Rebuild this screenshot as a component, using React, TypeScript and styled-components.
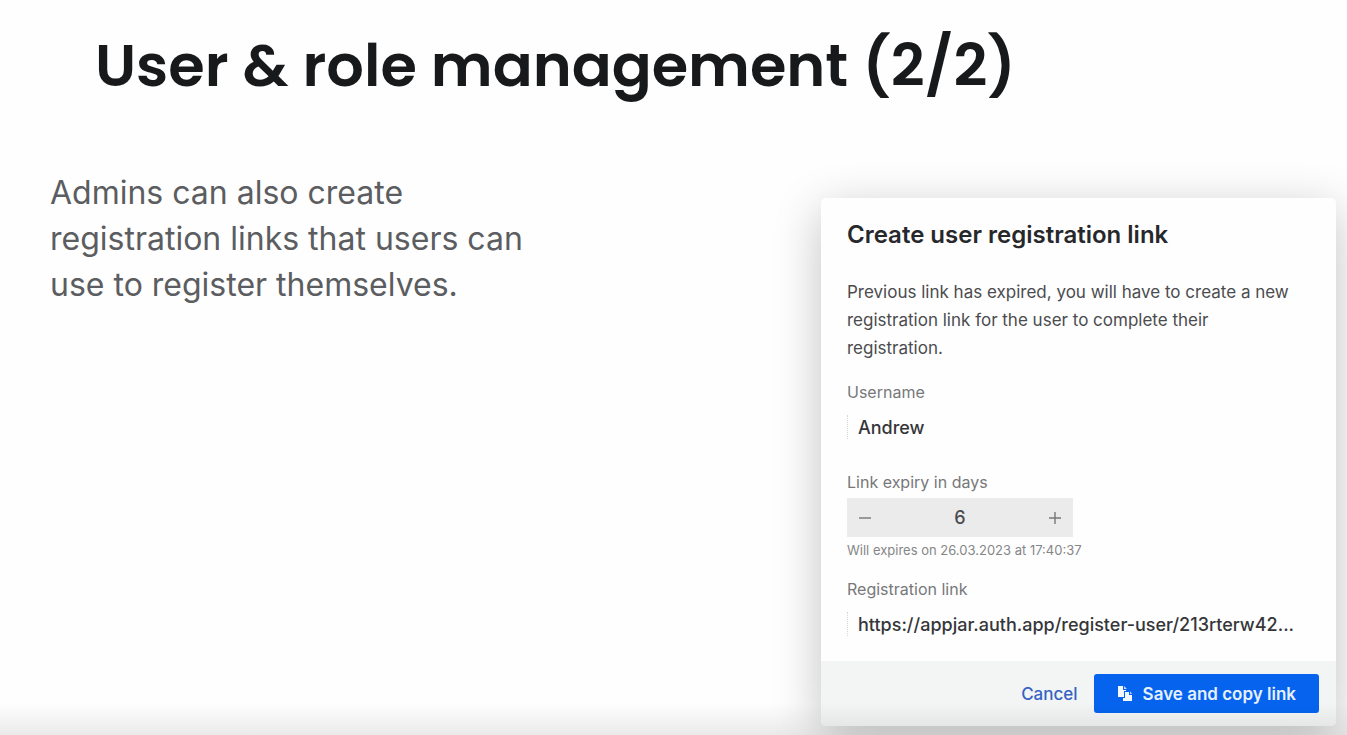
import React, { useState } from "react";
import styled, { createGlobalStyle } from "styled-components";

const GlobalStyle = createGlobalStyle`
  *, *::before, *::after { box-sizing: border-box; }
  body {
    margin: 0;
    background: #fefefe;
    font-family: Inter, "Liberation Sans", sans-serif;
  }
  button, input { font: inherit; }
`;

const Slide = styled.main`
  position: relative;
  min-height: 100vh;
  overflow: hidden;
  padding: 24px 11px 9px 50px;
`;

const Title = styled.h1`
  margin: 0;
  padding-left: 45px;
  font-family: Poppins, Inter, sans-serif;
  font-size: 59px;
  line-height: 84px;
  font-weight: 600;
  color: #17191b;
`;

const Content = styled.div`
  display: grid;
  grid-template-columns: minmax(0, 1fr) minmax(0, 515px);
  gap: 24px;
  align-items: start;
  padding-top: 62px;
`;

const Lead = styled.p`
  margin: 0;
  max-width: 500px;
  font-size: 32px;
  line-height: 46px;
  color: #5b5d61;
`;

const Dialog = styled.section`
  margin-top: 28px;
  border-radius: 5px;
  background: #fefefe;
  box-shadow: 0 12px 48px rgba(0, 0, 0, 0.24);
`;

const DialogBody = styled.div`
  padding: 20px 26px 25px;
`;

const DialogTitle = styled.h2`
  margin: 0 0 26px;
  font-size: 24px;
  line-height: 34px;
  font-weight: 600;
  color: #26282c;
`;

const Message = styled.p`
  margin: 0;
  padding-right: 4px;
  font-size: 17px;
  line-height: 28px;
  color: #4b4c4f;
`;

const Field = styled.div<{ $gap: number }>`
  display: flex;
  flex-direction: column;
  align-items: flex-start;
  margin-top: ${(p) => p.$gap}px;
`;

const Label = styled.label`
  font-size: 16px;
  line-height: 20px;
  color: #77787a;
`;

const TextInput = styled.input`
  width: 100%;
  height: 24px;
  margin-top: 13px;
  padding: 0 10px;
  border: 0;
  border-left: 1px dotted #d6d6d6;
  background: transparent;
  font-size: 18px;
  font-weight: 500;
  color: #35363a;
  outline: none;
`;

const Stepper = styled.div`
  display: flex;
  align-items: center;
  width: 226px;
  height: 39px;
  margin-top: 6px;
  background: #ebebeb;
`;

const StepButton = styled.button`
  display: grid;
  place-items: center;
  flex: none;
  width: 36px;
  height: 39px;
  padding: 0;
  border: 0;
  background: none;
  color: #77787a;
  cursor: pointer;
`;

const StepValue = styled.input`
  flex: 1;
  min-width: 0;
  padding: 0;
  border: 0;
  background: none;
  text-align: center;
  font-size: 18px;
  font-weight: 500;
  color: #4b4c4f;
  outline: none;
`;

const Hint = styled.small`
  margin-top: 4px;
  font-size: 13px;
  line-height: 18px;
  color: #858688;
`;

const DialogFooter = styled.footer`
  display: flex;
  justify-content: flex-end;
  align-items: center;
  gap: 16px;
  padding: 13px 17px;
  border-radius: 0 0 5px 5px;
  background: #f3f4f4;
`;

const CancelButton = styled.button`
  padding: 0;
  border: 0;
  background: none;
  font-size: 17px;
  font-weight: 500;
  color: #3662c4;
  cursor: pointer;
`;

const SaveButton = styled.button`
  display: flex;
  align-items: center;
  justify-content: center;
  gap: 10px;
  height: 39px;
  padding: 0 23px;
  border: 0;
  border-radius: 3px;
  background: #0563ee;
  font-size: 17px;
  font-weight: 600;
  white-space: nowrap;
  color: #e6f1ff;
  cursor: pointer;
`;

const BottomShade = styled.div`
  position: absolute;
  left: 0;
  right: 0;
  bottom: 0;
  height: 32px;
  background: linear-gradient(rgba(0, 0, 0, 0), rgba(0, 0, 0, 0.08));
  pointer-events: none;
`;

const CopyIcon = () => (
  <svg width="16" height="17" viewBox="0 0 16 17" aria-hidden="true">
    <path d="M1 1h5v4h3v1H7v6H1z" fill="#f4f9ff" />
    <path d="M7 1l3 3H7z" fill="#b9d6fb" />
    <path d="M8 7h4v3h3v6H6v-3h2z" fill="#f4f9ff" />
    <path d="M13 6l2 3h-2z" fill="#b9d6fb" />
  </svg>
);

export default function App() {
  const [name, setName] = useState("Andrew");
  const [days, setDays] = useState(6);

  return (
    <>
      <GlobalStyle />
      <Slide>
        <Title>User &amp; role management (2/2)</Title>
        <Content>
          <Lead>
            Admins can also create registration links that users can use to
            register themselves.
          </Lead>
          <Dialog role="dialog" aria-labelledby="dialog-title">
            <DialogBody>
              <DialogTitle id="dialog-title">
                Create user registration link
              </DialogTitle>
              <Message>
                Previous link has expired, you will have to create a new
                registration link for the user to complete their registration.
              </Message>
              <Field $gap={20}>
                <Label htmlFor="username">Username</Label>
                <TextInput
                  id="username"
                  value={name}
                  onChange={(e) => setName(e.target.value)}
                />
              </Field>
              <Field $gap={33}>
                <Label htmlFor="expiry">Link expiry in days</Label>
                <Stepper>
                  <StepButton
                    aria-label="Fewer days"
                    onClick={() => setDays(Math.max(1, days - 1))}
                  >
                    <svg width="14" height="14" viewBox="0 0 14 14">
                      <path d="M1 7h12" stroke="currentColor" strokeWidth="1.4" />
                    </svg>
                  </StepButton>
                  <StepValue
                    id="expiry"
                    inputMode="numeric"
                    value={days}
                    onChange={(e) => setDays(Number(e.target.value) || 1)}
                  />
                  <StepButton
                    aria-label="More days"
                    onClick={() => setDays(days + 1)}
                  >
                    <svg width="14" height="14" viewBox="0 0 14 14">
                      <path
                        d="M1 7h12M7 1v12"
                        stroke="currentColor"
                        strokeWidth="1.4"
                      />
                    </svg>
                  </StepButton>
                </Stepper>
                <Hint>Will expires on 26.03.2023 at 17:40:37</Hint>
              </Field>
              <Field $gap={20}>
                <Label htmlFor="link">Registration link</Label>
                <TextInput
                  id="link"
                  readOnly
                  value="https://appjar.auth.app/register-user/213rterw42..."
                />
              </Field>
            </DialogBody>
            <DialogFooter>
              <CancelButton>Cancel</CancelButton>
              <SaveButton>
                <CopyIcon />
                Save and copy link
              </SaveButton>
            </DialogFooter>
          </Dialog>
        </Content>
        <BottomShade />
      </Slide>
    </>
  );
}
